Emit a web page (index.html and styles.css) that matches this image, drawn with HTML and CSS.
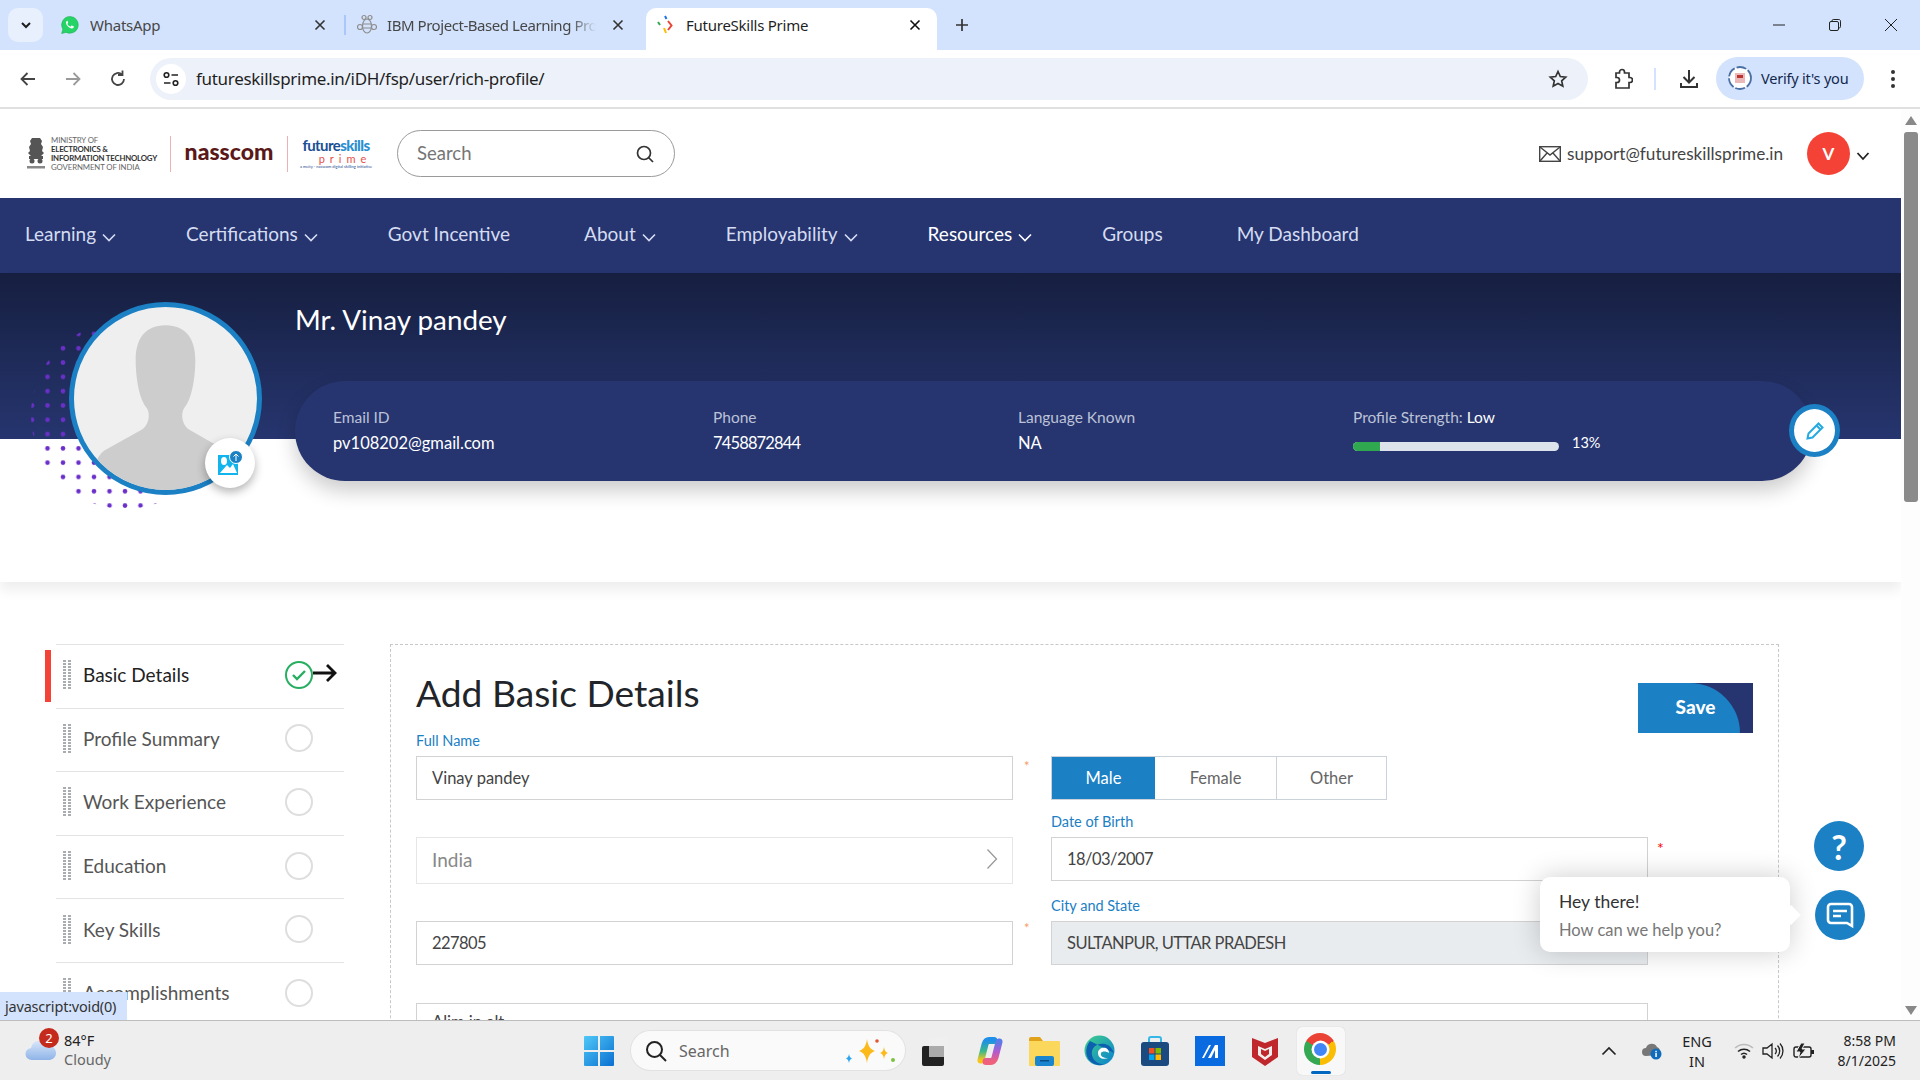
FILE: index.html
```html
<!DOCTYPE html>
<html lang="en">
<head>
<meta charset="utf-8">
<title>FutureSkills Prime</title>
<link rel="stylesheet" href="styles.css">
</head>
<body>
<div class="browser">
  <div class="tabbar">
    <div class="tab-drop"><svg width="14" height="14" viewBox="0 0 14 14"><path d="M3 5l4 4 4-4" fill="none" stroke="#1f1f1f" stroke-width="2"/></svg></div>
    <div class="tab tab-one">
      <svg class="fav" width="20" height="20" viewBox="0 0 20 20"><path d="M10 1.500a8.400 8.400 0 0 0-7.200 12.700L1.600 18.600l4.500-1.200A8.400 8.400 0 1 0 10 1.500z" fill="#25d366" stroke="#1fa855" stroke-width=".5"/><path d="M7.300 5.800c-.3 0-.8.2-1 .7-.6 1.300-.2 2.900 1.200 4.500 1.500 1.700 3.200 2.600 4.700 2.400.8-.1 1.500-.7 1.600-1.400.1-.3 0-.6-.2-.7l-1.700-.8c-.3-.1-.5 0-.6.2l-.6.8c-.2.2-.4.2-.6.100-1.100-.5-2-1.400-2.600-2.400-.1-.2-.1-.4.1-.6l.5-.6c.1-.2.100-.4 0-.6l-.7-1.700c-.1-.2-.3-.3-.5-.3z" fill="#fff"/></svg>
      <span class="tab-title">WhatsApp</span>
      <svg class="tab-x" width="12" height="12" viewBox="0 0 12 12"><path d="M1.500 1.500l9 9M10.500 1.500l-9 9" stroke="#333" stroke-width="1.600"/></svg>
    </div>
    <div class="tab-sep"></div>
    <div class="tab tab-two">
      <svg class="fav" width="20" height="22" viewBox="0 0 20 22" fill="none" stroke="#8d8d8d" stroke-width="1.200"><circle cx="7" cy="3.500" r="2"/><circle cx="13" cy="3.500" r="2"/><ellipse cx="10" cy="12" rx="4.500" ry="7"/><path d="M5.800 10h8.400M5.800 14h8.400"/><circle cx="3" cy="13" r="2.500"/><circle cx="17" cy="13" r="2.500"/></svg>
      <span class="tab-title tab-fade">IBM Project-Based Learning Pro</span>
      <svg class="tab-x" width="12" height="12" viewBox="0 0 12 12"><path d="M1.500 1.500l9 9M10.500 1.500l-9 9" stroke="#333" stroke-width="1.600"/></svg>
    </div>
    <div class="tab tab-active">
      <svg class="fav" width="20" height="20" viewBox="0 0 20 20" fill="none" stroke-width="2"><path d="M9 1l1.500 3" stroke="#1a73e8"/><path d="M2 7l2 3" stroke="#34a853"/><path d="M12 6l3.500 4.500-3.500 4.500" stroke="#ea4335"/><path d="M8 13l2 5" stroke="#fbbc04"/></svg>
      <span class="tab-title tab-title-on">FutureSkills Prime</span>
      <svg class="tab-x" width="12" height="12" viewBox="0 0 12 12"><path d="M1.500 1.500l9 9M10.500 1.500l-9 9" stroke="#111" stroke-width="1.600"/></svg>
    </div>
    <svg class="tab-plus" width="14" height="14" viewBox="0 0 14 14"><path d="M7 1v12M1 7h12" stroke="#333" stroke-width="1.700"/></svg>
    <div class="win-ctrls">
      <svg width="14" height="14" viewBox="0 0 14 14"><path d="M1 7h12" stroke="#222"/></svg>
      <svg width="14" height="14" viewBox="0 0 14 14" fill="none" stroke="#222"><rect x="1.500" y="3.500" width="9" height="9" rx="1.500"/><path d="M4 3.500V2.800c0-.7.5-1.300 1.300-1.300h5.500c1 0 1.700.7 1.700 1.700v5.500c0 .7-.5 1.300-1.300 1.300"/></svg>
      <svg width="14" height="14" viewBox="0 0 14 14"><path d="M1 1l12 12M13 1L1 13" stroke="#222"/></svg>
    </div>
  </div>

  <div class="toolbar">
    <div class="tool"><svg width="20" height="20" viewBox="0 0 20 20" fill="none" stroke="#444" stroke-width="1.800"><path d="M17 10H4M9.500 4l-6 6 6 6"/></svg></div>
    <div class="tool"><svg width="20" height="20" viewBox="0 0 20 20" fill="none" stroke="#9a9a9a" stroke-width="1.800"><path d="M3 10h13M10.500 4l6 6-6 6"/></svg></div>
    <div class="tool"><svg width="20" height="20" viewBox="0 0 20 20" fill="none" stroke="#444" stroke-width="1.800"><path d="M16 10a6 6 0 1 1-2-4.500"/><path d="M14.500 1.500v4.500H10"/></svg></div>
    <div class="omnibox">
      <div class="site-chip"><svg width="18" height="18" viewBox="0 0 18 18" fill="none" stroke="#222" stroke-width="1.600"><circle cx="4.500" cy="5" r="2.300"/><path d="M9.500 5H16M2 13h6.500"/><circle cx="13.500" cy="13" r="2.300"/></svg></div>
      <span class="url">futureskillsprime.in/iDH/fsp/user/rich-profile/</span>
      <svg class="star" width="20" height="20" viewBox="0 0 20 20"><path d="M10 2.500l2.300 5 5.400.6-4 3.700 1.100 5.400-4.800-2.700-4.800 2.700 1.100-5.400-4-3.700 5.400-.6z" fill="none" stroke="#333" stroke-width="1.700"/></svg>
    </div>
    <div class="tool tool-ext"><svg width="22" height="22" viewBox="0 0 22 22" fill="none" stroke="#333" stroke-width="1.700"><path d="M5 5h3.500V4a2.500 2.500 0 0 1 5 0v1H18v4.500h1a2.500 2.500 0 0 1 0 5h-1V20H5v-5.500h1a2.500 2.500 0 0 0 0-5H5z"/></svg></div>
    <div class="tool-div"></div>
    <div class="tool"><svg width="22" height="22" viewBox="0 0 22 22" fill="none" stroke="#333" stroke-width="2"><path d="M11 2v12M5.500 9l5.500 5.500L16.500 9M3 15v4h16v-4"/></svg></div>
    <div class="verify">
      <svg width="26" height="26" viewBox="0 0 26 26"><circle cx="13" cy="13" r="11" fill="#fff" stroke="#4a6fa5" stroke-width="1.800" stroke-dasharray="10 2"/><rect x="8" y="8" width="10" height="10" fill="#e9b9b9"/><rect x="10" y="10" width="6" height="3" fill="#b33"/></svg>
      <span>Verify it's you</span>
    </div>
    <div class="tool tool-menu"><svg width="6" height="20" viewBox="0 0 6 20" fill="#333"><circle cx="3" cy="3" r="2"/><circle cx="3" cy="10" r="2"/><circle cx="3" cy="17" r="2"/></svg></div>
  </div>

  <div class="viewport">
    <div class="page">
      <header class="site-head">
        <div class="logos">
          <svg class="emblem" width="20" height="36" viewBox="0 0 20 36" fill="#555"><path d="M6 2h8l2 3-1 3 2 3-1 4 2 2-3 3H5l-3-3 2-2-1-4 2-3-1-3z"/><rect x="3" y="20" width="14" height="3"/><circle cx="6" cy="25" r="2.500"/><circle cx="14" cy="25" r="2.500"/><rect x="1" y="30" width="18" height="2.500" fill="#888"/></svg>
          <div class="meity">
            <span class="meity-a">MINISTRY OF</span>
            <span class="meity-b">ELECTRONICS &amp;</span>
            <span class="meity-b">INFORMATION TECHNOLOGY</span>
            <span class="meity-a">GOVERNMENT OF INDIA</span>
          </div>
          <div class="logo-div"></div>
          <span class="nasscom">nasscom</span>
          <div class="logo-div logo-div-2"></div>
          <div class="fsp">
            <span class="fsp-top">future<b>skills</b></span>
            <span class="fsp-prime">prime</span>
            <span class="fsp-sub">a meity - nasscom digital skilling initiative</span>
          </div>
        </div>
        <div class="site-search">
          <span>Search</span>
          <svg width="20" height="20" viewBox="0 0 20 20" fill="none" stroke="#333" stroke-width="1.700"><circle cx="9" cy="9" r="6.500"/><path d="M13.500 13.500L18 18"/></svg>
        </div>
        <div class="support">
          <svg width="22" height="16" viewBox="0 0 22 16" fill="none" stroke="#444" stroke-width="1.400"><rect x=".7" y=".7" width="20.600" height="14.600"/><path d="M1 1l10 8 10-8M1 15l7.500-8.500M21 15l-7.500-8.500"/></svg>
          <span>support@futureskillsprime.in</span>
        </div>
        <div class="user-badge">V</div>
        <svg class="user-chev" width="14" height="10" viewBox="0 0 14 10"><path d="M1.500 2l5.500 6 5.500-6" fill="none" stroke="#222" stroke-width="1.800"/></svg>
      </header>

      <nav class="main-nav">
        <span class="nav-item">Learning<svg viewBox="0 0 14 9" width="14" height="9"><path d="M1 1.500l6 6 6-6" fill="none" stroke="currentColor" stroke-width="1.600"/></svg></span>
        <span class="nav-item">Certifications<svg viewBox="0 0 14 9" width="14" height="9"><path d="M1 1.500l6 6 6-6" fill="none" stroke="currentColor" stroke-width="1.600"/></svg></span>
        <span class="nav-item">Govt Incentive</span>
        <span class="nav-item">About<svg viewBox="0 0 14 9" width="14" height="9"><path d="M1 1.500l6 6 6-6" fill="none" stroke="currentColor" stroke-width="1.600"/></svg></span>
        <span class="nav-item">Employability<svg viewBox="0 0 14 9" width="14" height="9"><path d="M1 1.500l6 6 6-6" fill="none" stroke="currentColor" stroke-width="1.600"/></svg></span>
        <span class="nav-item nav-on">Resources<svg viewBox="0 0 14 9" width="14" height="9"><path d="M1 1.500l6 6 6-6" fill="none" stroke="currentColor" stroke-width="1.600"/></svg></span>
        <span class="nav-item">Groups</span>
        <span class="nav-item">My Dashboard</span>
      </nav>

      <section class="profile">
        <div class="avatar-wrap">
          <svg class="dots" width="190" height="200" viewBox="0 0 190 200">
            <defs>
              <pattern id="dotgrid" x="4.250" y="6.850" width="15.500" height="14.300" patternUnits="userSpaceOnUse"><circle cx="7.750" cy="7.150" r="2.300" fill="#6a2fc9"/></pattern>
              <clipPath id="dotclip"><circle cx="105" cy="95" r="94"/></clipPath>
            </defs>
            <rect width="190" height="200" fill="url(#dotgrid)" clip-path="url(#dotclip)"/>
          </svg>
          <div class="avatar">
            <svg width="183" height="183" viewBox="0 0 181 181"><path d="M90.500 18C70 18 61 32 61 52c0 20 4 40 11 48 4 6 2 18-6 22l-36 20c-8 6-12 18-15 39h151c-3-21-6-33-16-39l-35-20c-8-4-10-16-6-22 7-8 11-28 11-48 0-20-9-34-29.500-34z" fill="#cdcdcd"/></svg>
          </div>
          <div class="upload">
            <svg width="26" height="26" viewBox="0 0 26 26"><rect x="1" y="5" width="20" height="20" fill="#12b4ee"/><ellipse cx="7" cy="11" rx="3" ry="4" fill="#fff"/><path d="M3 23l7-8 3 3 3-4 4 9z" fill="#fff"/><circle cx="19" cy="7" r="6.500" fill="#1b80c4" stroke="#fff"/><path d="M19 11V4M16.500 6.500L19 4l2.500 2.500" fill="none" stroke="#fff"/></svg>
          </div>
        </div>
        <div class="profile-main">
          <h1 class="profile-name">Mr. Vinay pandey</h1>
          <div class="pill">
            <div class="pill-col"><span class="pill-label">Email ID</span><span class="pill-value">pv108202@gmail.com</span></div>
            <div class="pill-col"><span class="pill-label">Phone</span><span class="pill-value tight">7458872844</span></div>
            <div class="pill-col"><span class="pill-label">Language Known</span><span class="pill-value">NA</span></div>
            <div class="pill-col">
              <span class="pill-label">Profile Strength: <b>Low</b></span>
              <div class="strength"><div class="bar"><div class="bar-fill"></div></div><span>13%</span></div>
            </div>
            <div class="edit">
              <svg width="22" height="22" viewBox="0 0 22 22" fill="none" stroke="#27a9e1" stroke-width="2"><path d="M3.500 18.500l1-5L14.500 3.500l4 4-10 10z"/><path d="M12.500 5.500l4 4"/></svg>
            </div>
          </div>
        </div>
      </section>

      <main class="content">
        <aside class="steps">
          <div class="step step-on">
            <i class="grip"></i><span class="step-name">Basic Details</span>
            <span class="ring ring-ok"><svg width="16" height="12" viewBox="0 0 16 12"><path d="M2 6l4 4 8-8" fill="none" stroke="#27ae60" stroke-width="2.400"/></svg></span>
            <svg class="step-arrow" width="24" height="18" viewBox="0 0 24 18"><path d="M0 9h22M14 1l8 8-8 8" fill="none" stroke="#111" stroke-width="2.800"/></svg>
          </div>
          <div class="step"><i class="grip"></i><span class="step-name">Profile Summary</span><span class="ring"></span></div>
          <div class="step"><i class="grip"></i><span class="step-name">Work Experience</span><span class="ring"></span></div>
          <div class="step"><i class="grip"></i><span class="step-name">Education</span><span class="ring"></span></div>
          <div class="step"><i class="grip"></i><span class="step-name">Key Skills</span><span class="ring"></span></div>
          <div class="step"><i class="grip"></i><span class="step-name">Accomplishments</span><span class="ring"></span></div>
        </aside>
        <div class="panel">
          <div class="panel-head">
            <h2 class="panel-title">Add Basic Details</h2>
            <div class="save"><span>Save</span></div>
          </div>
          <div class="form">
            <div class="field">
              <label class="label">Full Name</label>
              <div class="input">Vinay pandey</div>
              <span class="req">*</span>
            </div>
            <div class="field field-nolabel">
              <div class="gender"><span class="g g-on">Male</span><span class="g g-f">Female</span><span class="g g-o">Other</span></div>
            </div>
            <div class="field field-nolabel">
              <div class="input input-soft">India<svg width="12" height="22" viewBox="0 0 12 22"><path d="M1.500 1.500l9 9.500-9 9.500" fill="none" stroke="#999" stroke-width="1.300"/></svg></div>
            </div>
            <div class="field">
              <label class="label">Date of Birth</label>
              <div class="input tight">18/03/2007</div>
              <span class="req req-red">*</span>
            </div>
            <div class="field field-nolabel">
              <div class="input tight">227805</div>
              <span class="req req-end">*</span>
            </div>
            <div class="field">
              <label class="label">City and State</label>
              <div class="input input-off tight">SULTANPUR, UTTAR PRADESH</div>
            </div>
            <div class="field field-wide">
              <div class="input">Alim in alt</div>
            </div>
          </div>
        </div>
      </main>
    </div>

    <div class="scrollbar">
      <i class="sb-up"></i>
      <div class="sb-track"><div class="sb-thumb"></div></div>
      <i class="sb-down"></i>
    </div>

    <div class="status-tip">javascript:void(0)</div>

    <div class="help-btn">?</div>
    <div class="chat-btn"><svg width="30" height="28" viewBox="0 0 30 28" fill="none" stroke="#fff" stroke-width="2.600"><path d="M6 3h18a3 3 0 0 1 3 3v19l-5-3H6a3 3 0 0 1-3-3V6a3 3 0 0 1 3-3z"/><path d="M8 10h14M8 15h8"/></svg></div>
    <div class="chat-pop"><span class="chat-hey">Hey there!</span><span class="chat-how">How can we help you?</span></div>
  </div>

  <footer class="taskbar">
    <div class="weather">
      <svg class="wx-cloud" width="32" height="22" viewBox="0 0 32 22"><defs><linearGradient id="cl" x1="0" y1="0" x2="0" y2="1"><stop offset="0" stop-color="#d8e6fa"/><stop offset="1" stop-color="#8fb4e8"/></linearGradient></defs><path d="M7 21a6 6 0 0 1-1-12 9 9 0 0 1 17-2 7 7 0 0 1 2 14z" fill="url(#cl)"/></svg>
      <span class="wx-badge">2</span>
      <div class="wx-text"><span class="wx-temp">84°F</span><span class="wx-sky">Cloudy</span></div>
    </div>
    <div class="task-center">
      <svg width="30" height="30" viewBox="0 0 30 30"><defs><linearGradient id="win" x1="0" y1="0" x2="1" y2="1"><stop offset="0" stop-color="#4fc8f8"/><stop offset="1" stop-color="#0a6fd0"/></linearGradient></defs><path d="M0 1a1 1 0 0 1 1-1h13v14H0zM16 0h13a1 1 0 0 1 1 1v13H16zM0 16h14v14H1a1 1 0 0 1-1-1zM16 16h14v13a1 1 0 0 1-1 1H16z" fill="url(#win)"/></svg>
      <div class="task-search">
        <svg width="22" height="22" viewBox="0 0 22 22" fill="none" stroke="#222" stroke-width="2"><circle cx="9.500" cy="9.500" r="7.500"/><path d="M15 15l6 6"/></svg>
        <span>Search</span>
        <svg class="sparkle" width="52" height="30" viewBox="0 0 52 30"><path d="M22 3c1 7 3 10 8 12-5 2-7 5-8 12-1-7-3-10-8-12 5-2 7-5 8-12z" fill="#fbb91a"/><path d="M39 11c.5 3.500 1.500 5 4 6-2.500 1-3.500 2.500-4 6-.5-3.500-1.500-5-4-6 2.500-1 3.500-2.500 4-6z" fill="#fbb91a"/><path d="M4 18c.4 2.500 1 3.500 3 4.500-2 1-2.600 2-3 4.500-.4-2.500-1-3.500-3-4.500 2-1 2.600-2 3-4.500z" fill="#2aa5ee"/><circle cx="32" cy="5" r="1.800" fill="#e4572e"/><circle cx="48" cy="24" r="2" fill="#7cc242"/></svg>
      </div>
      <div class="task-cell"><svg width="26" height="30" viewBox="0 0 26 30"><rect x="0" y="10" width="22" height="20" rx="2" fill="#222"/><rect x="7" y="1" width="19" height="20" rx="2" fill="#efefef"/><rect x="7" y="10" width="15" height="11" fill="#aaa"/></svg></div>
      <div class="task-cell"><svg width="30" height="30" viewBox="0 0 30 30" fill="none" stroke-width="7" stroke-linecap="round"><defs><linearGradient id="cp1" x1="0" y1="0" x2="0" y2="1"><stop offset="0" stop-color="#1f8fe8"/><stop offset=".55" stop-color="#3bb98a"/><stop offset="1" stop-color="#f5c518"/></linearGradient><linearGradient id="cp2" x1="0" y1="0" x2="0" y2="1"><stop offset="0" stop-color="#5a7be8"/><stop offset=".5" stop-color="#b25ad0"/><stop offset="1" stop-color="#f0607a"/></linearGradient></defs><path d="M19 4.500h-5c-2 0-3 1-4 4L6 24" stroke="url(#cp1)"/><path d="M11 25.500h5c2 0 3-1 4-4L24 6" stroke="url(#cp2)"/></svg></div>
      <div class="task-cell"><svg width="31" height="30" viewBox="0 0 31 30"><path d="M0 3a2 2 0 0 1 2-2h9l3 4h-14z" fill="#e0a21b"/><rect y="5" width="31" height="25" rx="1" fill="#fbd75b"/><rect x="6" y="20" width="19" height="10" rx="2" fill="#1a86d0"/><rect x="11" y="24" width="9" height="1.500" fill="#0a4f8a"/></svg></div>
      <div class="task-cell"><svg width="31" height="31" viewBox="0 0 31 31"><defs><linearGradient id="ed" x1="0" y1="0" x2="1" y2="1"><stop offset="0" stop-color="#3fd08a"/><stop offset="1" stop-color="#0a7fd0"/></linearGradient></defs><circle cx="15.500" cy="15.500" r="15" fill="url(#ed)"/><path d="M30 18c-3-8-9-10-14-9-6 1-9 6-8 11 1 6 7 10 13 9-5 2-11 1-15-3-5-5-5-14 0-20" fill="#0d5fb0"/><path d="M14 18c0-4 4-6 8-5 2 1 3 3 3 5-3-2-7-2-8 0-1 3 2 5 7 5-5 2-10 0-10-5z" fill="#fff"/></svg></div>
      <div class="task-cell"><svg width="30" height="30" viewBox="0 0 30 30"><path d="M9 7V3a2 2 0 0 1 2-2h8a2 2 0 0 1 2 2v4" fill="none" stroke="#35b8e8" stroke-width="2"/><rect x="1" y="6" width="28" height="24" rx="3" fill="#1b4a80"/><rect x="9" y="12" width="5.500" height="5.500" fill="#f25022"/><rect x="15.500" y="12" width="5.500" height="5.500" fill="#7fba00"/><rect x="9" y="18.500" width="5.500" height="5.500" fill="#00a4ef"/><rect x="15.500" y="18.500" width="5.500" height="5.500" fill="#ffb900"/></svg></div>
      <div class="task-cell"><svg width="30" height="30" viewBox="0 0 30 30"><rect width="30" height="30" fill="#0a6be0"/><path d="M7 22L14 9h2L9 22zM13 22L20 9h3v13h-3v-8l-4 8z" fill="#fff"/></svg></div>
      <div class="task-cell"><svg width="28" height="30" viewBox="0 0 28 30"><path d="M1 2l13 5 13-5v19l-13 9-13-9z" fill="#c0272d"/><path d="M7 10l7 3 7-3v9l-7 5-7-5z" fill="#eee"/><path d="M10 13l4 2 4-2v5l-4 3-4-3z" fill="#c0272d"/></svg></div>
      <div class="task-cell task-chrome"><span class="chrome"><i></i></span><em></em></div>
    </div>
    <div class="tray">
      <div class="tray-chev"><svg width="16" height="10" viewBox="0 0 16 10"><path d="M1.500 8.500L8 2l6.500 6.500" fill="none" stroke="#222" stroke-width="1.700"/></svg></div>
      <div class="tray-cloud"><svg width="22" height="18" viewBox="0 0 22 18"><path d="M5 14a4 4 0 0 1 0-8 6 6 0 0 1 11-1 5 5 0 0 1 2 8z" fill="#777"/><circle cx="15" cy="12" r="5.500" fill="#0f6cbd"/><rect x="14.300" y="11" width="1.500" height="4" fill="#fff"/><rect x="14.300" y="8.800" width="1.500" height="1.500" fill="#fff"/></svg></div>
      <div class="tray-lang"><span>ENG</span><span>IN</span></div>
      <div class="tray-wifi"><svg width="20" height="16" viewBox="0 0 20 16" fill="none" stroke="#222" stroke-width="1.500"><path d="M1 5a13 13 0 0 1 18 0" stroke="#bbb"/><path d="M4 8.500a9 9 0 0 1 12 0M7 11.500a4.500 4.500 0 0 1 6 0"/><circle cx="10" cy="14" r="1" fill="#222"/></svg></div>
      <div class="tray-vol"><svg width="22" height="18" viewBox="0 0 22 18" fill="none" stroke="#222" stroke-width="1.300"><path d="M1 6h4l5-4v14l-5-4H1zM13 6a4 4 0 0 1 0 6M15.500 3.500a8 8 0 0 1 0 11M18 1.500a11 11 0 0 1 0 15"/></svg></div>
      <div class="tray-bat"><svg width="22" height="18" viewBox="0 0 22 18"><rect x="1" y="5" width="17" height="10" rx="2" fill="none" stroke="#222" stroke-width="1.400"/><rect x="18" y="8" width="3" height="4" fill="#222"/><path d="M8 1L3 10h4l-2 7 8-10H9l3-6z" fill="#222" stroke="#eee"/></svg></div>
      <div class="tray-clock"><span>8:58 PM</span><span>8/1/2025</span></div>
    </div>
  </footer>
</div>
</body>
</html>
```

FILE: styles.css
```css
* { box-sizing: border-box; }
html, body { margin: 0; height: 100%; overflow: hidden; }
body { font-family: "Lato", "Noto Sans", sans-serif; color: #333; background: #fff; }
.browser { width: 1920px; height: 1080px; display: flex; flex-direction: column; overflow: hidden; }

/* tabs */
.tabbar { height: 50px; flex: none; background: #d3e3fd; display: flex; align-items: flex-end; padding-left: 8px; position: relative; font-family: "Noto Sans", sans-serif; }
.tab-drop { width: 35px; height: 34px; margin-bottom: 8px; margin-right: 7px; border-radius: 10px; background: #e8f0fe; display: flex; align-items: center; justify-content: center; }
.tab { height: 42px; display: flex; align-items: center; font-size: 15px; letter-spacing: -.25px; color: #474747; }
.tab-one { width: 294px; padding: 0 18px 8px 10px; }
.tab-two { width: 300px; padding: 0 22px 8px 11px; letter-spacing: -.45px; }
.tab-sep { width: 2px; height: 20px; margin-bottom: 15px; background: #a8c7fa; }
.tab-active { width: 291px; padding: 0 16px 8px 10px; background: #fff; border-radius: 10px 10px 0 0; color: #1f1f1f; }
.fav { flex: none; margin-right: 10px; }
.tab-title { flex: 1; white-space: nowrap; overflow: hidden; }
.tab-fade { -webkit-mask-image: linear-gradient(90deg, #000 88%, transparent); mask-image: linear-gradient(90deg, #000 88%, transparent); margin-right: 16px; }
.tab-x { flex: none; }
.tab-plus { margin: 0 0 18px 18px; }
.win-ctrls { margin-left: auto; display: flex; gap: 42px; padding: 0 22px 18px 0; }

/* toolbar */
.toolbar { height: 59px; flex: none; background: #fff; border-bottom: 2px solid #e0e0e0; border-radius: 10px 10px 0 0; display: flex; align-items: center; padding-left: 5px; font-family: "Noto Sans", sans-serif; }
.tool { width: 45px; height: 40px; display: flex; align-items: center; justify-content: center; flex: none; }
.omnibox { width: 1438px; height: 42px; margin-left: 10px; border-radius: 21px; background: #edf2fa; display: flex; align-items: center; padding: 0 20px 0 6px; }
.site-chip { width: 30px; height: 30px; border-radius: 50%; background: #fff; display: flex; align-items: center; justify-content: center; margin-right: 10px; }
.url { font-size: 17px; letter-spacing: -.3px; color: #1f1f1f; flex: 1; }
.tool-ext { margin-left: 11px; }
.tool-div { width: 2px; height: 22px; background: #d3e3fd; margin: 0 10px; }
.verify { width: 148px; height: 43px; margin-left: 5px; border-radius: 22px; background: #d3e3fd; display: flex; align-items: center; gap: 8px; padding: 0 0 1px 11px; font-size: 14.500px; letter-spacing: -.2px; color: #12284d; }
.tool-menu { margin-left: 6px; }

/* viewport */
.viewport { flex: 1; min-height: 0; display: flex; position: relative; overflow: hidden; }
.page { width: 1901px; flex: none; overflow: hidden; }
.scrollbar { flex: 1; display: flex; flex-direction: column; align-items: center; padding: 7px 0 5px 1px; background: #fdfdfd; }
.sb-up, .sb-down { width: 0; height: 0; border-left: 6px solid transparent; border-right: 6px solid transparent; }
.sb-up { border-bottom: 9px solid #888; }
.sb-down { border-top: 9px solid #888; }
.sb-track { flex: 1; width: 14px; padding-top: 7px; }
.sb-thumb { height: 370px; background: #8a8a8a; border-radius: 3px; }

/* header */
.site-head { height: 89px; display: flex; align-items: center; padding: 0 31px 0 26px; }
.logos { width: 371px; height: 40px; display: flex; align-items: center; flex: none; }
.emblem { flex: none; margin-right: 5px; }
.meity { display: flex; flex-direction: column; width: 119px; flex: none; font-size: 7.800px; line-height: 9px; color: #444; white-space: nowrap; }
.meity-a { font-weight: 400; color: #666; letter-spacing: -.1px; }
.meity-b { font-weight: 700; letter-spacing: -.2px; color: #333; }
.logo-div { width: 1px; height: 36px; background: #eeb2b2; flex: none; }
.nasscom { width: 116px; flex: none; text-align: center; font-size: 23px; font-weight: 900; color: #5b1818; padding-bottom: 5px; }
.logo-div-2 { margin-right: 12px; }
.fsp { display: flex; flex-direction: column; width: 72px; flex: none; align-items: center; }
.fsp-top { font-size: 15px; line-height: 16px; letter-spacing: -.6px; font-weight: 700; color: #1a4f94; white-space: nowrap; }
.fsp-top b { color: #2a8fd0; }
.fsp-prime { font-size: 11px; line-height: 11px; letter-spacing: 5px; color: #e8504a; padding-left: 18px; }
.fsp-sub { font-size: 4px; line-height: 6px; color: #274b8f; white-space: nowrap; }
.site-search { width: 278px; height: 47px; flex: none; border: 1px solid #9a9a9a; border-radius: 24px; display: flex; align-items: center; justify-content: space-between; padding: 0 19px; font-size: 18.500px; color: #757575; }
.site-search span { padding-bottom: 2px; }
.support { margin-left: auto; display: flex; align-items: center; gap: 6px; font-size: 17.200px; color: #444; }
.user-badge { width: 43px; height: 43px; margin-left: 24px; border-radius: 50%; background: #f44336; color: #fff; display: flex; align-items: center; justify-content: center; font-size: 17px; font-weight: 700; flex: none; }
.user-chev { margin-left: 6px; margin-top: 4px; flex: none; }

/* nav */
.main-nav { height: 75px; background: #26356f; display: flex; align-items: center; gap: 74px; padding: 0 0 4px 25px; }
.nav-item { font-size: 19px; color: #d5dcf2; display: flex; align-items: center; white-space: nowrap; }
.nav-item svg { margin: 7px -4px 0 6px; }
.nav-on { color: #fff; }

/* profile */
.profile { height: 309px; display: flex; align-items: flex-start; background: linear-gradient(#161f40, #26356f) no-repeat 0 0 / 100% 166px, #fff; box-shadow: 0 8px 12px rgba(0,0,0,.07); position: relative; }
.avatar-wrap { width: 193px; height: 193px; margin: 29px 0 0 69px; position: relative; flex: none; }
.dots { position: absolute; left: -49px; top: 18px; }
.avatar { position: relative; width: 193px; height: 193px; border: 5px solid #1b80c4; border-radius: 50%; background: #efefef; overflow: hidden; }
.avatar svg { display: block; }
.upload { position: absolute; left: 136px; top: 136px; width: 50px; height: 50px; border-radius: 50%; background: #fff; box-shadow: 0 4px 10px rgba(0,0,0,.3); display: flex; align-items: center; justify-content: center; }
.profile-main { margin: 29px 0 0 33px; width: 1517px; flex: none; }
.profile-name { margin: 0; font-size: 27.800px; line-height: 36px; font-weight: 400; color: #fff; }
.pill { margin-top: 43px; height: 100px; border-radius: 50px; background: #26356f; box-shadow: 0 10px 20px rgba(0,0,0,.2); display: grid; grid-template-columns: 380px 305px 335px 1fr; padding: 25px 0 0 38px; position: relative; }
.pill-col { display: flex; flex-direction: column; }
.pill-label { font-size: 15.500px; line-height: 22px; color: #bcc2d8; }
.pill-label b { font-weight: 400; color: #fff; }
.pill-value { font-size: 16.500px; line-height: 26px; margin-top: 2px; color: #fff; }
.pill-value.tight { letter-spacing: -.85px; }
.strength { display: flex; align-items: flex-start; gap: 13px; height: 26px; margin-top: 2px; font-size: 14.500px; line-height: 26px; color: #fff; }
.bar { width: 206px; height: 9px; margin-top: 12px; border-radius: 5px; background: #dde3ea; overflow: hidden; }
.bar-fill { width: 27px; height: 100%; background: #2fa84f; }
.edit { position: absolute; right: -28px; top: 23px; width: 51px; height: 53px; border-radius: 50%; background: #fff; border: 5px solid #1b80c4; display: flex; align-items: center; justify-content: center; }

/* content */
.content { display: flex; padding: 62px 0 0 56px; gap: 46px; height: 700px; }
.steps { width: 288px; flex: none; }
.step { height: 63.600px; border-top: 1px solid #e3e3e3; display: flex; align-items: center; position: relative; padding: 0 0 3px 7px; font-size: 19px; color: #555; }
.step-on { color: #222; }
.step-on::before { content: ""; position: absolute; left: -11px; top: 5px; width: 6px; height: 52px; background: #f44336; }
.grip { width: 8px; height: 29px; flex: none; margin-right: 12px; background: #a9adb2; -webkit-mask-image: repeating-linear-gradient(#000 0 2px, transparent 2px 3px), linear-gradient(90deg, #000 0 3px, transparent 3px 5px, #000 5px); -webkit-mask-composite: source-in; mask-composite: intersect; }
.step-name { flex: 1; white-space: nowrap; }
.ring { width: 28px; height: 28px; border: 2px solid #dedede; border-radius: 50%; flex: none; margin-right: 31px; display: flex; align-items: center; justify-content: center; background: #fff; }
.ring-ok { border-color: #27ae60; }
.step-arrow { position: absolute; left: 257px; top: 19px; }
.panel { width: 1389px; flex: none; border: 1px dashed #c8c8c8; padding: 38px 25px 0 25px; height: 600px; }
.panel-head { display: flex; justify-content: space-between; align-items: flex-start; height: 50px; }
.panel-title { margin: -10px 0 0; font-size: 37.200px; line-height: 40px; font-weight: 400; color: #212529; }
.save { width: 115px; height: 50px; background: #26356f; position: relative; color: #fff; font-size: 19px; font-weight: 900; display: flex; align-items: center; justify-content: center; }
.save::before { content: ""; position: absolute; left: 0; top: 0; width: 102px; height: 50px; background: #1b80c4; border-top-right-radius: 50px 50px; }
.save span { position: relative; padding-bottom: 3px; }
.form { display: grid; grid-template-columns: 597px 597px; column-gap: 38px; row-gap: 14px; align-items: start; }
.field { display: flex; flex-direction: column; position: relative; }
.field-nolabel { padding-top: 23px; }
.field-wide { grid-column: 1 / 3; margin-top: 1px; padding-top: 23px; }
.label { height: 18px; margin-bottom: 5px; font-size: 14.500px; line-height: 16px; color: #1b80c4; }
.input { height: 44px; border: 1px solid #d2d2d2; padding: 0 15px 1px; display: flex; align-items: center; font-size: 16.500px; color: #444; white-space: nowrap; background: #fff; }
.input.tight { letter-spacing: -.55px; }
.field-wide .input { align-items: flex-start; padding-top: 8px; height: 60px; }
.input-soft { height: 47px; border-color: #e6e6e6; font-size: 19px; color: #888; justify-content: space-between; padding: 0 14px 3px 15px; }
.input.input-off { background: #e9ecef; }
.req { position: absolute; left: 608px; top: 27px; font-size: 13px; line-height: 13px; color: #f79a6a; }
.req-end { top: 24px; }
.req-red { left: 606px; top: 27px; color: #f00; font-size: 16px; }
.gender { display: flex; width: 336px; height: 44px; border: 1px solid #ccd2da; font-size: 16.500px; color: #666; }
.g { display: flex; align-items: center; justify-content: center; border-right: 1px solid #ccd2da; padding-bottom: 1px; }
.g-on { width: 103px; background: #1b80c4; color: #fff; border-right: 0; }
.g-f { width: 122px; }
.g-o { flex: 1; border-right: 0; }

/* overlays */
.status-tip { position: absolute; left: 0; bottom: 0; width: 127px; height: 28px; background: #d3e3fd; font: 14.500px/28px "Noto Sans", sans-serif; letter-spacing: -.2px; padding-left: 5px; color: #333; }
.help-btn, .chat-btn { position: absolute; width: 50px; height: 50px; border-radius: 50%; background: #1b80c4; color: #fff; display: flex; align-items: center; justify-content: center; }
.help-btn { left: 1814px; top: 712px; font-size: 34px; font-weight: 700; }
.chat-btn { left: 1815px; top: 781px; }
.chat-pop { position: absolute; left: 1540px; top: 768px; width: 250px; height: 75px; border-radius: 10px; background: #fff; box-shadow: 0 0 28px rgba(0,0,0,.2); display: flex; flex-direction: column; justify-content: center; gap: 4px; padding-left: 19px; }
.chat-pop::after { content: ""; position: absolute; right: -8px; top: 31px; width: 14px; height: 14px; background: #fff; transform: rotate(45deg); }
.chat-hey { font-size: 17.500px; line-height: 24px; color: #333; padding-top: 2px; }
.chat-how { font-size: 16.500px; line-height: 24px; color: #777; }

/* taskbar */
.taskbar { height: 60px; flex: none; background: #eeeeee; border-top: 1px solid #bdbdbd; display: flex; align-items: center; font-family: "Noto Sans", sans-serif; }
.weather { width: 584px; flex: none; position: relative; display: flex; align-items: center; padding-left: 64px; }
.wx-cloud { position: absolute; left: 25px; top: 8px; }
.wx-badge { position: absolute; left: 39px; top: -3px; width: 20px; height: 20px; border-radius: 50%; background: #c42b1c; color: #fff; font-size: 13px; line-height: 20px; text-align: center; }
.wx-text { display: flex; flex-direction: column; font-size: 14.500px; line-height: 19px; padding-bottom: 2px; }
.wx-temp { color: #222; }
.wx-sky { color: #666; }
.task-center { display: flex; align-items: center; }
.task-search { width: 274px; height: 39px; margin: 0 2px 0 17px; border-radius: 20px; background: #fafafa; box-shadow: 0 0 0 1px #e2e2e2; display: flex; align-items: center; padding: 0 8px 0 14px; gap: 12px; font-size: 16px; color: #666; }
.sparkle { margin-left: auto; }
.task-cell { width: 55.100px; display: flex; align-items: center; justify-content: center; position: relative; }
.task-chrome { height: 48px; }
.task-chrome::before { content: ""; position: absolute; left: 4px; top: 0; width: 48px; height: 48px; border-radius: 5px; background: #f8f8f8; box-shadow: 0 0 1px rgba(0,0,0,.2); }
.task-chrome em { position: absolute; left: 18px; bottom: 1px; width: 20px; height: 3px; border-radius: 2px; background: #0067c0; }
.chrome { position: relative; width: 32px; height: 32px; border-radius: 50%; background: conic-gradient(from 300deg, #ea4335 0 120deg, #fbbc04 0 240deg, #34a853 0); display: flex; align-items: center; justify-content: center; margin-bottom: 3px; }
.chrome i { width: 13px; height: 13px; border-radius: 50%; background: #4285f4; box-shadow: 0 0 0 2.500px #fff; }
.tray { margin-left: auto; display: flex; align-items: center; padding-right: 24px; color: #222; }
.tray > div { display: flex; align-items: center; justify-content: center; flex: none; }
.tray-chev { width: 28px; }
.tray-cloud { width: 30px; margin-left: 14px; }
.tray-lang { width: 60px; flex-direction: column; font-size: 14.500px; line-height: 20px; }
.tray-wifi { width: 30px; margin-left: 2px; }
.tray-vol { width: 28px; }
.tray-bat { width: 34px; }
.tray-clock { width: 75px; flex-direction: column; align-items: flex-end !important; font-size: 14px; line-height: 20px; white-space: nowrap; }
```
